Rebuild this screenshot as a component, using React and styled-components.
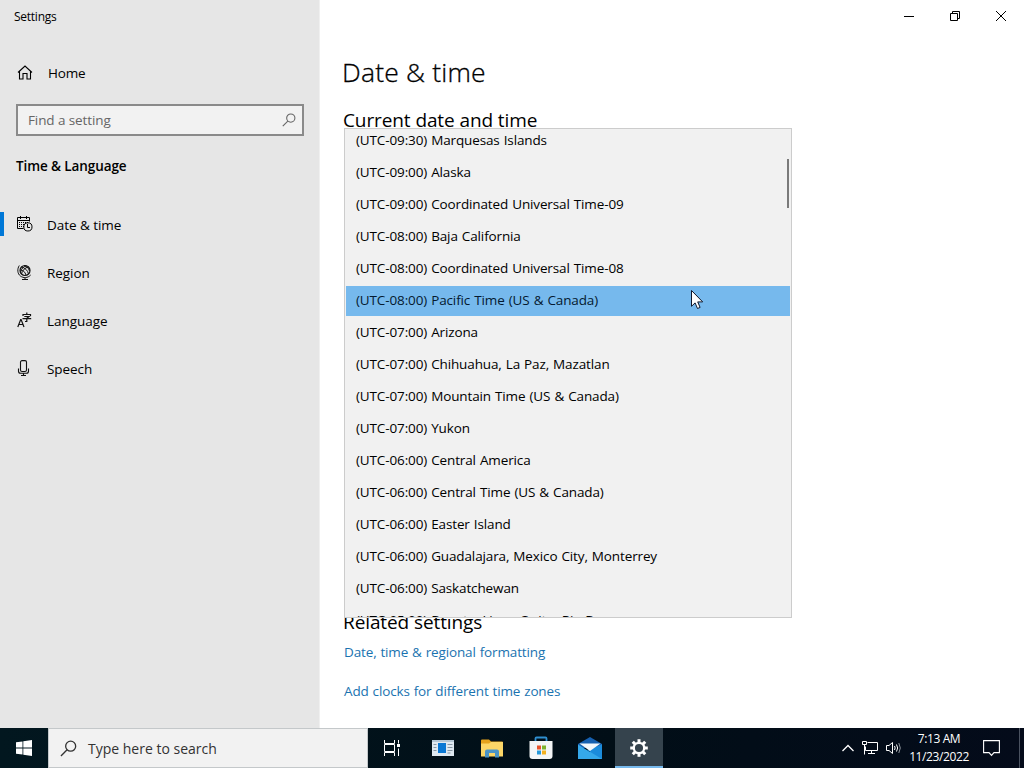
import styled, { createGlobalStyle } from 'styled-components';

const zones = [
    { label: '(UTC-09:30) Marquesas Islands' },
    { label: '(UTC-09:00) Alaska' },
    { label: '(UTC-09:00) Coordinated Universal Time-09' },
    { label: '(UTC-08:00) Baja California' },
    { label: '(UTC-08:00) Coordinated Universal Time-08' },
    { label: '(UTC-08:00) Pacific Time (US & Canada)', active: true },
    { label: '(UTC-07:00) Arizona' },
    { label: '(UTC-07:00) Chihuahua, La Paz, Mazatlan' },
    { label: '(UTC-07:00) Mountain Time (US & Canada)' },
    { label: '(UTC-07:00) Yukon' },
    { label: '(UTC-06:00) Central America' },
    { label: '(UTC-06:00) Central Time (US & Canada)' },
    { label: '(UTC-06:00) Easter Island' },
    { label: '(UTC-06:00) Guadalajara, Mexico City, Monterrey' },
    { label: '(UTC-06:00) Saskatchewan' },
    { label: '(UTC-05:00) Bogota, Lima, Quito, Rio Branco' },
];

const menu = [
    { label: 'Date & time', icon: <CalendarIcon />, active: true },
    { label: 'Region', icon: <GlobeIcon /> },
    { label: 'Language', icon: <LanguageIcon /> },
    { label: 'Speech', icon: <MicIcon /> },
];

export default function App() {
    return (
        <Desktop>
            <GlobalStyle />
            <Window>
                <Sidebar>
                    <AppName>Settings</AppName>
                    <HomeLink>
                        <HomeIcon />
                        <span>Home</span>
                    </HomeLink>
                    <SearchBox>
                        <span>Find a setting</span>
                        <SearchIcon size={14} />
                    </SearchBox>
                    <Section>Time &amp; Language</Section>
                    <Menu>
                        {menu.map((el) => (
                            <MenuItem key={el.label} $active={el.active}>
                                {el.icon}
                                <span>{el.label}</span>
                            </MenuItem>
                        ))}
                    </Menu>
                </Sidebar>
                <Main>
                    <Controls>
                        <MinimizeIcon />
                        <RestoreIcon />
                        <CloseIcon />
                    </Controls>
                    <Title>Date &amp; time</Title>
                    <Subtitle>Current date and time</Subtitle>
                    <Picker>
                        <Dropdown>
                            <Options>
                                {zones.map((el) => (
                                    <Option key={el.label} $active={el.active}>
                                        {el.label}
                                    </Option>
                                ))}
                            </Options>
                            <Thumb />
                        </Dropdown>
                    </Picker>
                    <Subtitle>Related settings</Subtitle>
                    <Links>
                        <Link>Date, time &amp; regional formatting</Link>
                        <Link>Add clocks for different time zones</Link>
                    </Links>
                </Main>
            </Window>
            <Taskbar>
                <TaskButton>
                    <WindowsIcon />
                </TaskButton>
                <TaskSearch>
                    <SearchIcon size={17} />
                    <span>Type here to search</span>
                </TaskSearch>
                <TaskButton>
                    <TaskViewIcon />
                </TaskButton>
                <Pinned>
                    <TaskButton>
                        <NewsIcon />
                    </TaskButton>
                    <TaskButton>
                        <FolderIcon />
                    </TaskButton>
                    <TaskButton>
                        <StoreIcon />
                    </TaskButton>
                    <TaskButton>
                        <MailIcon />
                    </TaskButton>
                    <TaskButton $active>
                        <GearIcon />
                    </TaskButton>
                </Pinned>
                <Tray>
                    <ChevronIcon />
                    <NetworkIcon />
                    <SpeakerIcon />
                    <Clock>
                        <span>7:13 AM</span>
                        <span>11/23/2022</span>
                    </Clock>
                    <NoticeIcon />
                    <PeekLine />
                </Tray>
            </Taskbar>
            <Cursor width="14" height="21" viewBox="0 0 14 21">
                <path
                    d="M1.5 1.5v15.8l3.6-3.4 2.4 5.6 2.6-1.1-2.4-5.5h5z"
                    fill="#fff"
                    stroke="#10182c"
                />
            </Cursor>
        </Desktop>
    );
}

function HomeIcon() {
    return (
        <svg width="16" height="16" viewBox="0 0 16 16" fill="none" stroke="#000" strokeWidth="1.1">
            <path d="M1 7.5 8 1l7 6.500M2.500 6.500v7.500h3.500V8.500h4V14h3.500V6.500" />
        </svg>
    );
}

function SearchIcon({ size }) {
    return (
        <svg width={size} height={size} viewBox="0 0 18 18" fill="none" stroke="currentColor" strokeWidth="1.4">
            <circle cx="11.3" cy="6.5" r="5.3" />
            <path d="M7.5 10.4 1 17" />
        </svg>
    );
}

function CalendarIcon() {
    return (
        <svg width="16" height="16" viewBox="0 0 16 16" fill="none" stroke="#000">
            <path d="M6.5 12.5h-6v-11h12v4M.5 4.500h12M3.500 0v3M9.500 0v3" />
            <path d="M2 6.500h9M2 8.500h5M2 10.500h5" strokeDasharray="1 1" />
            <circle cx="10.9" cy="10.9" r="4.1" />
            <path d="M10.5 8v3.5H13" />
        </svg>
    );
}

function GlobeIcon() {
    return (
        <svg width="16" height="16" viewBox="0 0 16 16" fill="none" stroke="#111">
            <circle cx="8" cy="6.500" r="5" strokeWidth="1.2" />
            <path d="M4.500 3c3 .4 6.500 3.500 7 7M3.300 6c3 0 4.700 2 5.700 5M11.500 3C8 3.500 5 6.500 4.500 10M7 1.600c3 .9 4.500 2.400 5.500 5.400M3.500 8C4.500 4.500 6.500 2.500 9.500 1.800" />
            <path d="M2.300 1.500C0 5 .4 9.700 3.400 12c2.900 2.300 7.400 2.200 10.300-1M8 13.500v2M5 15.500h6" />
        </svg>
    );
}

function LanguageIcon() {
    return (
        <svg width="16" height="16" viewBox="0 0 16 16" fill="none" stroke="#111" strokeWidth="1.2">
            <path d="m.8 15 2.900-7.500h.4L7 15M1.800 12.500h4.200" />
            <path d="M6 4V2.500h7.500V4M9.800.5v2M7.300 4.500h4.700L9.800 6.200v3.300H8M5.500 6.700h8.700" />
        </svg>
    );
}

function MicIcon() {
    return (
        <svg width="16" height="16" viewBox="0 0 16 16" fill="none" stroke="#111" strokeWidth="1.1">
            <rect x="3.5" y=".6" width="6" height="10.9" rx="1.5" />
            <path d="M1.500 8.500v2.700a2 2 0 0 0 2 2h6a2 2 0 0 0 2-2V8.500M6.500 13v2.500M4 15.500h5" />
        </svg>
    );
}

function MinimizeIcon() {
    return (
        <svg width="10" height="10" viewBox="0 0 10 10" stroke="#000">
            <path d="M0 5.5h10" />
        </svg>
    );
}

function RestoreIcon() {
    return (
        <svg width="10" height="10" viewBox="0 0 10 10" fill="none" stroke="#000">
            <path d="M.5 2.5h7v7h-7zM2.5 2.5v-2h7v7h-2" />
        </svg>
    );
}

function CloseIcon() {
    return (
        <svg width="10" height="10" viewBox="0 0 10 10" stroke="#000">
            <path d="m0 0 10 10M10 0 0 10" />
        </svg>
    );
}

function WindowsIcon() {
    return (
        <svg width="16" height="16" viewBox="0 0 16 16" fill="#fff">
            <path d="M0 2.3 6.5 1.4v6.200H0zM7.300 1.300 16 0v7.600H7.300zM0 8.400h6.500v6.200L0 13.700zM7.300 8.400H16V16l-8.700-1.300z" />
        </svg>
    );
}

function TaskViewIcon() {
    return (
        <svg width="18" height="16" viewBox="0 0 18 16" fill="none" stroke="#fff">
            <path d="M1.500 0v3.500h10V0M1.500 16v-3.500h10V16M1.500 4.500h10v7h-10zM15.500 0v3.500M15.500 8.500V16" />
            <path d="M14 4h3v3h-3z" fill="#fff" stroke="none" />
        </svg>
    );
}

function NewsIcon() {
    return (
        <svg width="22" height="16" viewBox="0 0 22 16">
            <path d="M0 0h22v16H0z" fill="#dfe9f1" />
            <path d="M0 0h22v2H0z" fill="#b4c6d4" />
            <path d="M6 3h8v10H6z" fill="#0a78d4" />
            <path d="M1.5 4.500h3M1.500 7.500h3M1.500 10.500h3M15.500 4.500h5M15.500 7.500h5M15.500 10.500h5M15.500 13h3" stroke="#8796a3" />
        </svg>
    );
}

function FolderIcon() {
    return (
        <svg width="22" height="19" viewBox="0 0 22 19">
            <path d="M0 1.500Q0 .5 1 .5h7l2 2h11q1 0 1 1V17H0z" fill="#e5a21c" />
            <path d="M0 4.500h8L10 3h12v14.500H0z" fill="#fcd667" />
            <path d="M4 18.500v-6q0-2 2-2h10q2 0 2 2v6h-4V14H8v4.500z" fill="#4b94c6" />
        </svg>
    );
}

function StoreIcon() {
    return (
        <svg width="24" height="24" viewBox="0 0 24 24">
            <path d="M6.500 6V2.500q0-1 1-1h9q1 0 1 1V6" fill="none" stroke="#2f8fd0" strokeWidth="1.8" />
            <path d="M.5 5h23v15q0 3-3 3h-17q-3 0-3-3z" fill="#f3f5f6" />
            <path d="M8 9.500h4v4H8z" fill="#e8532b" />
            <path d="M13 9.500h4v4h-4z" fill="#7db32d" />
            <path d="M8 14.500h4v4H8z" fill="#2798d8" />
            <path d="M13 14.500h4v4h-4z" fill="#f2b01e" />
        </svg>
    );
}

function MailIcon() {
    return (
        <svg width="24" height="22" viewBox="0 0 24 22">
            <path d="M0 7 12 0l12 7v4H0z" fill="#1660b0" />
            <path d="M0 7.500 12 15l12-7.500V22H0z" fill="#35a8ea" />
            <path d="M24 7.500V22L9 13z" fill="#1b8bdb" />
            <path d="M1.500 6.500h21L12 14z" fill="#f2f7fb" />
        </svg>
    );
}

function GearIcon() {
    return (
        <svg width="18" height="18" viewBox="-9 -9 18 18" fill="none" stroke="#fff">
            <circle r="5.2" strokeWidth="2.3" />
            {[0, 45, 90, 135, 180, 225, 270, 315].map((deg) => (
                <path key={deg} d="M0-5.5V-8.8" strokeWidth="3" transform={`rotate(${deg})`} />
            ))}
        </svg>
    );
}

function ChevronIcon() {
    return (
        <svg width="12" height="8" viewBox="0 0 12 8" fill="none" stroke="#fff" strokeWidth="1.3">
            <path d="m.5 7 5.500-5.500L11.500 7" />
        </svg>
    );
}

function NetworkIcon() {
    return (
        <svg width="16" height="14" viewBox="0 0 16 14" fill="none" stroke="#fff">
            <path d="M5.500 1.500h10v8h-12v-4M9.500 9.500v3M6 12.500h7M.5.500h4v3h-4zM2.500 3.500v10" />
        </svg>
    );
}

function SpeakerIcon() {
    return (
        <svg width="16" height="14" viewBox="0 0 16 14" fill="none" stroke="#fff">
            <path d="M.5 4.500H3l3.500-3v11L3 9.500H.5zM8.500 5q1.300 2 0 4M10.500 3.500q2.300 3.500 0 7" />
            <path d="M12.800 2q3 5 0 10" stroke="#8b929a" />
        </svg>
    );
}

function NoticeIcon() {
    return (
        <svg width="17" height="17" viewBox="0 0 17 17" fill="none" stroke="#fff" strokeWidth="1.1">
            <path d="M.6.600h15.800v12h-5.400L8.500 15.400 6 12.600H.6z" />
        </svg>
    );
}

const GlobalStyle = createGlobalStyle`
    body {
        margin: 0;
        overflow: hidden;
        font-family: 'Open Sans', 'Noto Sans', sans-serif;
        color: #000;
    }

    * {
        box-sizing: border-box;
    }

    svg {
        display: block;
        flex-shrink: 0;
    }
`;

const Desktop = styled.div`
    position: relative;
    display: flex;
    flex-direction: column;
    width: 1024px;
    height: 768px;
    white-space: nowrap;
`;

const Window = styled.div`
    display: flex;
    height: 728px;
    background-color: #fff;
`;

const Sidebar = styled.div`
    width: 320px;
    border-right: 1px solid #f0f0f0;
    background-color: #e6e6e6;
`;

const AppName = styled.div`
    height: 32px;
    padding-left: 14px;
    font-size: 12px;
    line-height: 33px;
    letter-spacing: -0.25px;
`;

const HomeLink = styled.div`
    display: flex;
    align-items: center;
    gap: 15px;
    height: 48px;
    margin-top: 17px;
    padding-left: 17px;
    font-size: 13.5px;
    letter-spacing: -0.2px;
`;

const SearchBox = styled.div`
    display: flex;
    align-items: center;
    justify-content: space-between;
    width: 288px;
    height: 32px;
    margin: 7px 0 0 16px;
    padding: 0 6px 1px 10px;
    border: 2px solid #8a8a8a;
    background-color: #f2f2f2;
    color: #666;
    font-size: 13.5px;
    letter-spacing: -0.1px;
`;

const Section = styled.div`
    height: 32px;
    margin-top: 14px;
    padding-left: 16px;
    font-size: 13.5px;
    font-weight: 600;
    line-height: 33px;
    letter-spacing: -0.1px;
`;

const Menu = styled.div`
    margin-top: 18px;
`;

const MenuItem = styled.div`
    display: flex;
    align-items: center;
    gap: 14px;
    height: 48px;
    padding-left: 17px;
    font-size: 13.5px;
    letter-spacing: -0.05px;
    background: ${({ $active }) =>
        $active ? 'linear-gradient(#0078d7, #0078d7) 0 50% / 4px 24px no-repeat' : 'none'};

    span {
        padding-top: 1px;
    }
`;

const Main = styled.div`
    width: 704px;
    padding-left: 24px;
`;

const Controls = styled.div`
    display: flex;
    justify-content: flex-end;
    align-items: center;
    gap: 36px;
    height: 32px;
    padding-right: 18px;
`;

const Title = styled.div`
    height: 40px;
    margin: 20px 0 0 -2px;
    font-size: 26.5px;
    font-weight: 300;
    line-height: 40px;
    letter-spacing: 0.2px;
    -webkit-text-stroke: 0.3px #000;
`;

const Subtitle = styled.div`
    height: 28px;
    margin: 14px 0 0 -1px;
    font-size: 19px;
    line-height: 28px;
    letter-spacing: -0.1px;
`;

const Picker = styled.div`
    position: relative;
    height: 460px;
`;

const Dropdown = styled.div`
    position: absolute;
    top: -6px;
    left: 0;
    width: 448px;
    height: 490px;
    padding: 0 1px;
    border: 1px solid #ccc;
    background-color: #f1f1f1;
    overflow: hidden;
`;

const Options = styled.div`
    margin-top: -4px;
`;

const Option = styled.div`
    height: 32px;
    padding-left: 10px;
    border: solid transparent;
    border-width: 1px 0;
    background-clip: padding-box;
    background-color: ${({ $active }) => ($active ? '#76b9ed' : 'transparent')};
    color: ${({ $active }) => ($active ? '#051a30' : '#000')};
    font-size: 13.5px;
    line-height: 29px;
    letter-spacing: -0.13px;
    word-spacing: 0.7px;
`;

const Thumb = styled.div`
    position: absolute;
    top: 30px;
    right: 2px;
    width: 2px;
    height: 49px;
    background-color: #7a7a7a;
`;

const Links = styled.div`
    display: flex;
    flex-direction: column;
    gap: 19px;
    margin-top: 6px;
`;

const Link = styled.a`
    height: 20px;
    color: #1a73b0;
    font-size: 13.5px;
    line-height: 20px;
    letter-spacing: -0.13px;
    word-spacing: 0.5px;
`;

const Taskbar = styled.div`
    display: flex;
    height: 40px;
    background: linear-gradient(90deg, #02171f, #010e17 60%, #040b1a);
    color: #fff;
`;

const TaskButton = styled.div`
    display: flex;
    align-items: center;
    justify-content: center;
    width: 48px;
    height: 40px;
    background-color: ${({ $active }) => ($active ? '#35434d' : 'transparent')};
    box-shadow: ${({ $active }) => ($active ? 'inset 0 -2px #76b9ed' : 'none')};
`;

const TaskSearch = styled.div`
    display: flex;
    align-items: center;
    gap: 11px;
    width: 320px;
    padding-left: 11px;
    border: 1px solid #c4c8ca;
    background-color: #f2f2f2;
    color: #333;
    font-size: 14px;
`;

const Pinned = styled.div`
    display: flex;
    gap: 1px;
    margin-left: 3px;
`;

const Tray = styled.div`
    display: flex;
    align-items: center;
    margin-left: auto;
    gap: 8px;
`;

const Clock = styled.div`
    display: flex;
    flex-direction: column;
    align-items: center;
    width: 58px;
    margin-right: 7px;
    font-size: 12px;
    line-height: 18px;
    letter-spacing: -0.4px;
`;

const PeekLine = styled.div`
    width: 5px;
    height: 40px;
    margin-left: 11px;
    border-left: 1px solid #4a5260;
`;

const Cursor = styled.svg`
    position: absolute;
    top: 289px;
    left: 690px;
`;
